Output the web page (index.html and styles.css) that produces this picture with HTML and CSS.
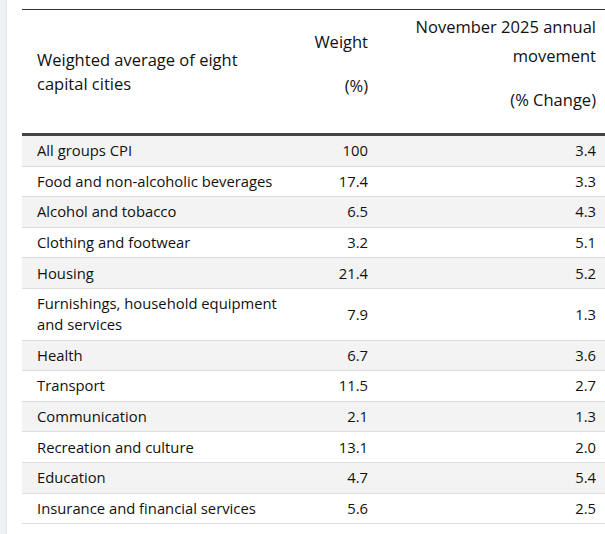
FILE: index.html
```html
<!DOCTYPE html>
<html lang="en">
<head>
<meta charset="utf-8">
<title>CPI weights</title>
<link rel="stylesheet" href="styles.css">
</head>
<body>
<div class="page">
  <div class="rail"></div>
  <div class="content">
    <table class="cpi">
      <colgroup>
        <col class="c1"><col class="c2"><col class="c3">
      </colgroup>
      <thead>
        <tr>
          <th class="h-label">Weighted average of eight<br>capital cities</th>
          <th class="h-num h-weight">
            <div class="hl">Weight</div>
            <div class="hl hl-gap">(%)</div>
          </th>
          <th class="h-num h-move">
            <div class="hl">November 2025 annual movement</div>
            <div class="hl hl-gap">(% Change)</div>
          </th>
        </tr>
      </thead>
      <tbody>
        <tr><td>All groups CPI</td><td class="n">100</td><td class="n">3.4</td></tr>
        <tr><td>Food and non-alcoholic beverages</td><td class="n">17.4</td><td class="n">3.3</td></tr>
        <tr><td>Alcohol and tobacco</td><td class="n">6.5</td><td class="n">4.3</td></tr>
        <tr><td>Clothing and footwear</td><td class="n">3.2</td><td class="n">5.1</td></tr>
        <tr><td>Housing</td><td class="n">21.4</td><td class="n">5.2</td></tr>
        <tr><td>Furnishings, household equipment and services</td><td class="n">7.9</td><td class="n">1.3</td></tr>
        <tr><td>Health</td><td class="n">6.7</td><td class="n">3.6</td></tr>
        <tr><td>Transport</td><td class="n">11.5</td><td class="n">2.7</td></tr>
        <tr><td>Communication</td><td class="n">2.1</td><td class="n">1.3</td></tr>
        <tr><td>Recreation and culture</td><td class="n">13.1</td><td class="n">2.0</td></tr>
        <tr><td>Education</td><td class="n">4.7</td><td class="n">5.4</td></tr>
        <tr><td>Insurance and financial services</td><td class="n">5.6</td><td class="n">2.5</td></tr>
      </tbody>
    </table>
  </div>
</div>
</body>
</html>
```

FILE: styles.css
```css
html, body {
  margin: 0;
  padding: 0;
  background: #ffffff;
}

body {
  font-family: "Open Sans", "Noto Sans", sans-serif;
  color: #111111;
  overflow: hidden;
}

.page {
  display: flex;
  width: 605px;
  height: 534px;
  overflow: hidden;
}

.rail {
  flex: 0 0 6px;
  background: #edf0f4;
  border-right: 1px solid #e2e6eb;
}

.content {
  flex: 0 0 auto;
  padding: 9px 0 0 15px;
}

.cpi {
  width: 589px;
  table-layout: fixed;
  border-collapse: collapse;
  border-top: 1px solid #333333;
}

.c1 { width: 280px; }
.c2 { width: 81px; }
.c3 { width: 228px; }

.cpi th {
  font-weight: 400;
  font-size: 16.5px;
  color: #111111;
  border-bottom: 3px solid #444444;
}

.h-label {
  text-align: left;
  vertical-align: middle;
  line-height: 24px;
  padding: 0 15px;
  height: 123px;
  box-sizing: border-box;
}

.h-num {
  text-align: right;
  vertical-align: middle;
  padding: 2px 15px 19px 4px;
}

.hl {
  line-height: 29px;
}

.hl-gap {
  margin-top: 15px;
}

.cpi td {
  font-size: 14.8px;
  line-height: 21px;
  padding: 4.3px 15px;
  border-bottom: 1px solid #dddddd;
  color: #111111;
  vertical-align: middle;
}

.cpi td.n {
  text-align: right;
  padding-left: 4px;
}

.cpi tbody tr:nth-child(odd) td {
  background: #f3f3f3;
}
```
